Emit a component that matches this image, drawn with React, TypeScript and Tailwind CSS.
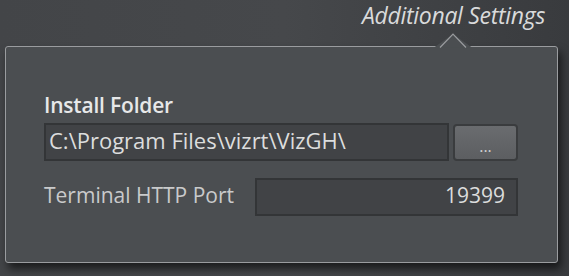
import React from 'react';

const font = { fontFamily: '"Open Sans", "Noto Sans", sans-serif' };

export default function App() {
  return (
    <div
      className="w-[569px] h-[276px] overflow-hidden bg-gradient-to-r from-[#434548] via-[#46484b] to-[#393b3e] flex flex-col"
      style={font}
    >
      {/* header */}
      <div className="h-[46px] flex justify-end pr-[24px]">
        <span className="italic text-[23px] leading-[30px] text-[#d9dadb] tracking-[-0.3px]">
          Additional Settings
        </span>
      </div>

      {/* popup */}
      <div className="relative ml-[5px] w-[553px] h-[217px] rounded-[3px] border border-[#9a9c9f] bg-[#4b4e51] shadow-[3px_6px_8px_rgba(0,0,0,0.6)] pl-[38px] pr-[39px] pt-[46px]">
        {/* caret */}
        <svg
          className="absolute left-[428px] top-[-14px]"
          width="38"
          height="15"
          viewBox="0 0 38 15"
        >
          <path d="M0 14.5 L19 1 L38 14.5" fill="#4b4e51" stroke="none" />
          <path d="M6 14.5 L19 1.2 L32 14.5" fill="#4b4e51" stroke="#9a9c9f" strokeWidth="1.2" />
        </svg>

        <div className="text-[21px] leading-[24px] font-semibold text-[#e7e8e9] tracking-[-0.2px]">Install Folder</div>

        <div className="mt-[6px] flex gap-[4px] items-start">
          <div className="w-[405px] h-[38px] bg-[#414346] border-[2px] border-[#333537] flex items-center pl-[3px] pb-[3px] text-[22px] text-[#dcdddd]">
            C:\Program Files\vizrt\VizGH\
          </div>
          <button className="mt-[1px] w-[65px] h-[37px] rounded-[4px] border-[2px] border-[#3a3c3e] bg-gradient-to-b from-[#6a6c6f] to-[#5c5e61] text-[#d0d1d2] text-[16px] leading-none pt-[6px]">
            ...
          </button>
        </div>

        <div className="mt-[17px] flex items-center">
          <div className="w-[211px] text-[21px] pb-[3px] text-[#c9cacb]">Terminal HTTP Port</div>
          <div className="w-[263px] h-[38px] bg-[#414346] border-[2px] border-[#333537] flex items-center justify-end pr-[11px] pb-[3px] text-[21px] text-[#dcdddd]">
            19399
          </div>
        </div>
      </div>
    </div>
  );
}
